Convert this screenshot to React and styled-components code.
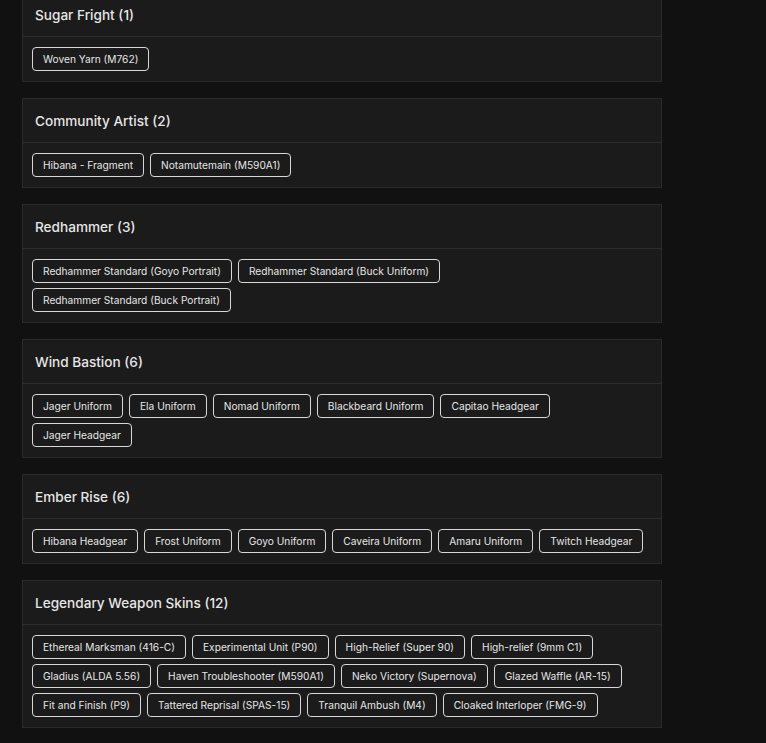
import React from "react";
import styled, { createGlobalStyle } from "styled-components";

const GlobalStyle = createGlobalStyle`
  html, body {
    margin: 0;
    padding: 0;
    background: #111111;
  }
  body {
    font-family: "Inter", "Open Sans", "Liberation Sans", sans-serif;
    color: #e8e8e8;
  }
`;

const groups = [
  { name: "Sugar Fright", items: ["Woven Yarn (M762)"] },
  { name: "Community Artist", items: ["Hibana - Fragment", "Notamutemain (M590A1)"] },
  {
    name: "Redhammer",
    items: [
      "Redhammer Standard (Goyo Portrait)",
      "Redhammer Standard (Buck Uniform)",
      "Redhammer Standard (Buck Portrait)",
    ],
  },
  {
    name: "Wind Bastion",
    items: [
      "Jager Uniform",
      "Ela Uniform",
      "Nomad Uniform",
      "Blackbeard Uniform",
      "Capitao Headgear",
      "Jager Headgear",
    ],
  },
  {
    name: "Ember Rise",
    items: [
      "Hibana Headgear",
      "Frost Uniform",
      "Goyo Uniform",
      "Caveira Uniform",
      "Amaru Uniform",
      "Twitch Headgear",
    ],
  },
  {
    name: "Legendary Weapon Skins",
    items: [
      "Ethereal Marksman (416-C)",
      "Experimental Unit (P90)",
      "High-Relief (Super 90)",
      "High-relief (9mm C1)",
      "Gladius (ALDA 5.56)",
      "Haven Troubleshooter (M590A1)",
      "Neko Victory (Supernova)",
      "Glazed Waffle (AR-15)",
      "Fit and Finish (P9)",
      "Tattered Reprisal (SPAS-15)",
      "Tranquil Ambush (M4)",
      "Cloaked Interloper (FMG-9)",
    ],
  },
];

function App() {
  return (
    <>
      <GlobalStyle />
      <Page>
        {groups.map((group) => (
          <Card key={group.name}>
            <CardHeader>
              {group.name} ({group.items.length})
            </CardHeader>
            <CardBody>
              {group.items.map((item) => (
                <Chip key={item}>{item}</Chip>
              ))}
            </CardBody>
          </Card>
        ))}
      </Page>
    </>
  );
}

const Page = styled.div`
  width: 640px;
  margin: -8px 0 0 22px;
  display: flex;
  flex-direction: column;
  gap: 16px;
  padding-bottom: 20px;
`;

const Card = styled.section`
  background: #1b1b1b;
  border: 1px solid #2a2a2a;
`;

const CardHeader = styled.div`
  height: 43px;
  display: flex;
  align-items: center;
  padding: 0 12px;
  border-bottom: 1px solid #2c2c2c;
  font-size: 13.6px;
  font-weight: 500;
  color: #e6e6e6;
`;

const CardBody = styled.div`
  display: flex;
  flex-wrap: wrap;
  gap: 5px 6px;
  padding: 10px 17px 10px 9px;
`;

const Chip = styled.span`
  height: 24px;
  box-sizing: border-box;
  display: inline-flex;
  align-items: center;
  padding: 0 10px;
  border: 1px solid #d8d8d8;
  border-radius: 4px;
  font-size: 10.2px;
  color: #e6e6e6;
  white-space: nowrap;
`;

export default App;
